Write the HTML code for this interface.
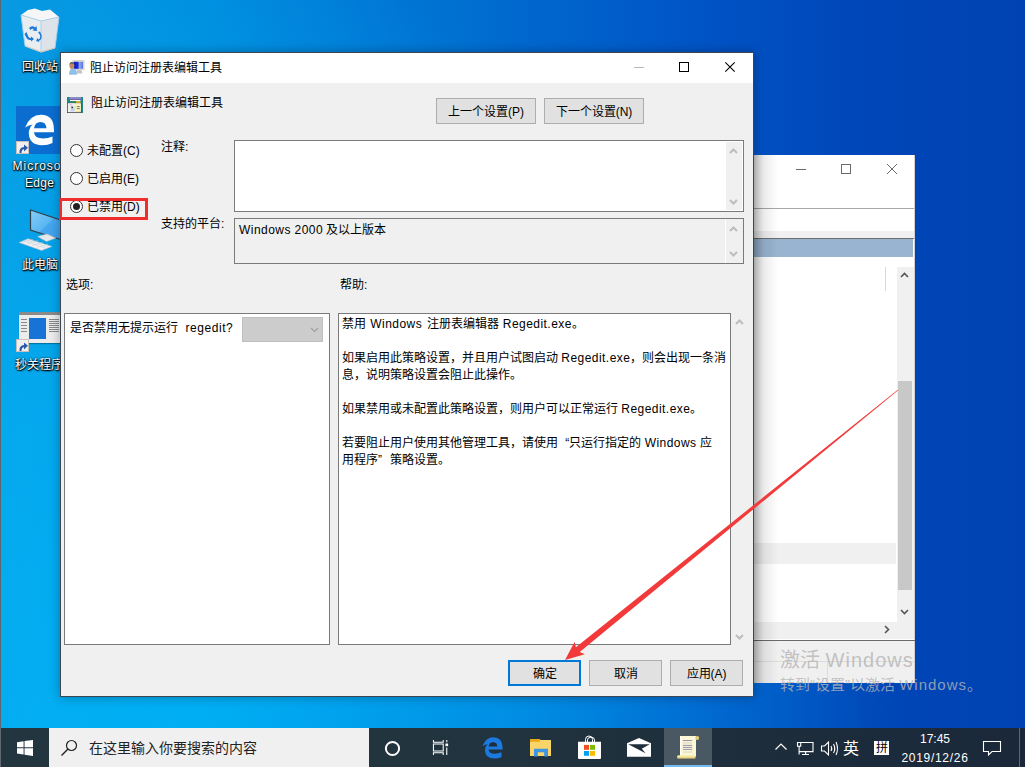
<!DOCTYPE html>
<html lang="zh-CN">
<head>
<meta charset="utf-8">
<style>
*{box-sizing:border-box;margin:0;padding:0}
html,body{width:1025px;height:767px;overflow:hidden}
body{position:relative;font-family:"Liberation Sans",sans-serif;font-size:12px;color:#000;
background:radial-gradient(ellipse 700px 800px at 200px 767px,rgba(0,192,255,.65) 0%,rgba(0,192,255,.4) 50%,rgba(0,192,255,0) 100%),linear-gradient(90deg,#089ae2 0%,#0090e0 19.5%,#0076d4 39%,#0054c6 68%,#0046b8 85%,#0042b2 100%)}
.a{position:absolute}
.t{position:absolute;white-space:nowrap;line-height:16px;font-size:12px}
.il{position:absolute;color:#fff;font-size:12px;line-height:16px;white-space:nowrap;text-shadow:0 1px 1px #000,1px 1px 2px #000,0 0 2px #000}
.btn{position:absolute;background:#e1e1e1;border:1px solid #adadad;text-align:center;line-height:24px;padding-top:1px;font-size:12px;white-space:nowrap}
.box{position:absolute;border:1px solid #7a7a7a;background:#fff}
.radio{position:absolute;width:13px;height:13px;border:1px solid #333;border-radius:50%;background:#fff}
svg{position:absolute;overflow:visible}
.l{letter-spacing:.45px}
.q1{margin-left:4px}
.q2{margin-right:4.5px}
</style>
</head>
<body>
<!-- left dark strip -->
<div class="a" style="left:0;top:0;width:1px;height:728px;background:#5a6670"></div>

<!-- ============ desktop icons ============ -->
<!-- recycle bin -->
<svg style="left:0;top:0" width="70" height="60" viewBox="0 0 70 60">
  <path d="M21 15 L28 10 L35 8.5 L42 11 L50 9.5 L59 17 L41 21 Z" fill="#f6f6f6"/>
  <path d="M21 15 L41 21 L41 52 L25 46 Z" fill="#e9edf0"/>
  <path d="M41 21 L59 17 L55 48 L41 52 Z" fill="#dde3e8"/>
  <path d="M21 15 L41 21 L59 17 M41 21 L41 52 M21 15 L25 46 L41 52 L55 48 L59 17" stroke="#a8d0ec" stroke-width="0.9" fill="none"/>
  <path d="M25 46 L41 52 L55 48" stroke="#d8c8b8" stroke-width="1" fill="none"/>
  <path d="M29 28 Q32 25 35 27.5 L36.5 26 L37 31 L32.5 30.5 L34 29 Q32 28 30.5 30 Z M26.5 32 L28 36 Q29 38.5 31 38 L31 36.5 L34 39 L31 41.5 L31 40 Q27.5 40.5 26 37 L24.5 34 Z M38 32 L40 35 Q41 38 38.5 39.5 L37.5 38 L36 41 L39.5 42 L39 40.8 Q42.5 39 41.5 35 L40 31.5 Z" fill="#1a78d6"/>
</svg>
<div class="il" style="left:22px;top:59px">回收站</div>

<!-- edge -->
<div class="a" style="left:16px;top:106px;width:48px;height:48px;background:#0b6dd0"></div>
<svg style="left:16px;top:106px" width="48" height="48" viewBox="0 0 48 48">
  <path d="M38 26.3 L18 26.3 Q18.5 32.5 27 32.5 Q32 32.5 36.5 30.5 L36.5 37 Q32 39.2 26 39.2 Q13 39 12.8 27 Q13 22 16.5 18.5 Q12 19.5 9.1 21.5 Q14 9 25 8.8 Q38 8.8 38 24 Z" fill="#fff"/>
  <path d="M18 22.3 Q19 16 24.5 16 Q30 16 30.5 22.3 Z" fill="#0b6dd0"/>
</svg>
<div class="a" style="left:16px;top:141px;width:13px;height:13px;background:#f0f0f0;border:1px solid #c8c0b8"></div>
<svg style="left:18px;top:143px" width="10" height="10" viewBox="0 0 10 10"><path d="M1.5 10 Q1 4.5 6 4 L6 1.5 L10 4.8 L6 8.5 L6 6.2 Q3.5 6.5 3.5 10 Z" fill="#2c5aa8"/></svg>
<div class="il" style="left:12.5px;top:158px;letter-spacing:1px">Microsoft</div>
<div class="il" style="left:25px;top:175px;letter-spacing:.3px">Edge</div>

<!-- this pc -->
<svg style="left:18px;top:208px" width="46" height="46" viewBox="0 0 46 46">
  <defs><linearGradient id="scr" x1="0" y1="0" x2="1" y2="1"><stop offset="0" stop-color="#86cdf8"/><stop offset="0.5" stop-color="#5ab6f2"/><stop offset="0.52" stop-color="#45a8ee"/><stop offset="1" stop-color="#3a9ae8"/></linearGradient></defs>
    <path d="M12.5 2 L44 12.5 L44 32 L12.5 22 Z" fill="url(#scr)" stroke="#34414c" stroke-width="1.2"/>
  <path d="M19.5 28.5 L29 26 L38 30 L28.5 33.5 Z" fill="#e4e8ea" stroke="#b8bec4" stroke-width="0.5"/>
  <path d="M1 34.5 L10 30.7 L34 38.5 L23.5 42.4 Z" fill="#f0f2f4" stroke="#b0b8c0" stroke-width="0.6"/>
  <path d="M5 33 L28.5 40.5 M7.5 32 L31 39.5 M3.5 34.5 L15 31.5 M9 36 L20 32.5 M14 37.8 L25 34 M19 39.5 L30 36" stroke="#c8ced4" stroke-width="0.5"/>
</svg>
<div class="il" style="left:22px;top:257px">此电脑</div>

<!-- 秒关程序 -->
<div class="a" style="left:19px;top:312px;width:41px;height:31px;background:#ececec;border-top:3px solid #8a8a8a;box-shadow:0 1px 1px rgba(0,0,0,.3)"></div>
<div class="a" style="left:29px;top:318px;width:17px;height:21px;background:#1773d6"></div>
<div class="a" style="left:49px;top:319px;width:10px;height:1px;background:#888;box-shadow:0 2px 0 #888,0 4px 0 #888,0 6px 0 #888,0 8px 0 #888,0 10px 0 #888,0 12px 0 #888"></div>
<div class="a" style="left:21px;top:319px;width:6px;height:1px;background:#888;box-shadow:0 3px 0 #888,0 6px 0 #888,0 9px 0 #888,0 12px 0 #888"></div>
<div class="a" style="left:16px;top:339px;width:13px;height:13px;background:#f0f0f0;border:1px solid #c8c0b8"></div>
<svg style="left:18px;top:341px" width="10" height="10" viewBox="0 0 10 10"><path d="M1.5 10 Q1 4.5 6 4 L6 1.5 L10 4.8 L6 8.5 L6 6.2 Q3.5 6.5 3.5 10 Z" fill="#2c5aa8"/></svg>
<div class="il" style="left:15px;top:357px">秒关程序</div>

<!-- ============ behind window ============ -->
<div class="a" style="left:753px;top:155px;width:162px;height:528px;background:#fff;border-right:1px solid #d0d0d0;border-bottom:1px solid #d0d0d0"></div>
<div class="a" style="left:796px;top:169px;width:10px;height:1px;background:#6a6a6a"></div>
<div class="a" style="left:841px;top:164px;width:10px;height:10px;border:1px solid #6a6a6a"></div>
<svg style="left:887px;top:164px" width="10" height="10"><path d="M0 0 L10 10 M10 0 L0 10" stroke="#6a6a6a" stroke-width="1"/></svg>
<div class="a" style="left:753px;top:208px;width:161px;height:1px;background:#a8a8a8"></div>
<div class="a" style="left:753px;top:231px;width:161px;height:8px;background:#f0f0f0;border-bottom:1px solid #6e6e6e"></div>
<div class="a" style="left:753px;top:239px;width:160px;height:18px;background:#99b4d1"></div>
<div class="a" style="left:753px;top:543px;width:143px;height:21px;background:#f0f0f0"></div>
<div class="a" style="left:885px;top:267px;width:1px;height:24px;background:#d8d8d8"></div>
<div class="a" style="left:897px;top:267px;width:17px;height:355px;background:#f0f0f0"></div>
<div class="a" style="left:898px;top:381px;width:14px;height:209px;background:#c8c8c8"></div>
<svg style="left:900px;top:272px" width="9" height="6"><path d="M1 5 L4.5 1.5 L8 5" stroke="#555" stroke-width="1.6" fill="none"/></svg>
<svg style="left:900px;top:609px" width="9" height="6"><path d="M1 1 L4.5 4.5 L8 1" stroke="#555" stroke-width="1.6" fill="none"/></svg>
<div class="a" style="left:753px;top:622px;width:161px;height:17px;background:#f0f0f0"></div>
<svg style="left:884px;top:625px" width="6" height="9"><path d="M1 1 L4.5 4.5 L1 8" stroke="#555" stroke-width="1.6" fill="none"/></svg>
<div class="a" style="left:753px;top:640px;width:162px;height:1px;background:#6a6a6a"></div>
<div class="a" style="left:753px;top:641px;width:161px;height:42px;background:#f0f0f0"></div>
<div class="a" style="left:753px;top:661px;width:161px;height:1px;background:#dcdcdc"></div>
<div class="a" style="left:827px;top:661px;width:1px;height:22px;background:#dcdcdc"></div>
<!-- shadow cast by dialog -->
<div class="a" style="left:754px;top:155px;width:24px;height:528px;background:linear-gradient(90deg,rgba(0,0,0,.22),rgba(0,0,0,.08) 40%,rgba(0,0,0,0))"></div>

<!-- ============ dialog ============ -->
<div class="a" style="left:60px;top:52px;width:694px;height:645px;border:1px solid #3a4654;background:#f0f0f0;box-shadow:0 0 10px rgba(0,0,0,.3)"></div>
<div class="a" style="left:61px;top:53px;width:692px;height:30px;background:#fff"></div>
<!-- title icon -->
<svg style="left:64px;top:56px" width="24" height="24" viewBox="0 0 24 24">
  <defs><linearGradient id="sg" x1="0" x2="1"><stop offset="0" stop-color="#0a10c0"/><stop offset=".45" stop-color="#1830d8"/><stop offset=".6" stop-color="#90a8f4"/><stop offset="1" stop-color="#5870e0"/></linearGradient></defs>
  <rect x="8.4" y="4" width="12.2" height="10" fill="#dad6ca"/>
  <rect x="9.8" y="5.8" width="9.2" height="7" fill="url(#sg)"/>
  <path d="M13 14 H17.5 L18.5 17.5 H12.5 Z" fill="#c4c4c4"/>
  <path d="M5 18.8 Q5 12.8 8.5 12.5 L10 12.5 Q13 12.8 13 18.8 Z" fill="#90c0e8"/>
  <ellipse cx="7.9" cy="9.8" rx="2.5" ry="3.1" fill="#c08a62"/>
  <path d="M5.4 9 Q5.6 5.8 8 5.9 Q10.4 6 10.4 9 Q9.5 7.5 8 7.6 Q6.5 7.5 5.4 9 Z" fill="#555"/>
</svg>
<div class="t" style="left:90px;top:60px">阻止访问注册表编辑工具</div>
<div class="a" style="left:634px;top:67px;width:10px;height:1px;background:#b8b8b8"></div>
<div class="a" style="left:679px;top:62px;width:10px;height:10px;border:1px solid #000"></div>
<svg style="left:725px;top:62px" width="10" height="10"><path d="M0.3 0.3 L9.7 9.7 M9.7 0.3 L0.3 9.7" stroke="#000" stroke-width="1.1"/></svg>

<!-- policy icon -->
<svg style="left:67px;top:97px" width="16" height="16" viewBox="0 0 16 16">
  <rect x="0" y="0" width="16" height="16" fill="#1a8a80"/>
  <rect x="2.5" y="0" width="11.5" height="2.5" fill="#8c8cc8"/>
  <rect x="1.5" y="2" width="13" height="1" fill="#6868a8"/>
  <rect x="3" y="3" width="10.5" height="1.2" fill="#f4f4ff"/>
  <rect x="3" y="4.2" width="6" height="1.2" fill="#3a8a50"/>
  <rect x="9" y="4.2" width="4.5" height="1.8" fill="#f0c020"/>
  <rect x="0" y="5.8" width="14.5" height="10.2" fill="#4a4a4a"/>
  <rect x="0.8" y="6.2" width="13" height="9" fill="#f4f4f4"/>
  <circle cx="5.2" cy="10.4" r="4.1" fill="#e8f0e8"/>
  <path d="M5.2 10.4 L2 8 A4.1 4.1 0 0 1 5.2 6.3 Z" fill="#f0c8e8"/>
  <path d="M5.2 10.4 L3 14 A4.1 4.1 0 0 0 8.5 12.5 Z" fill="#c8d0f4"/>
  <path d="M5.2 10.4 L8.5 12.5 A4.1 4.1 0 0 0 9 9 Z" fill="#c8f0c8"/>
  <circle cx="5.2" cy="10.4" r="0.9" fill="#333"/>
  <rect x="8.8" y="6.8" width="5" height="7" fill="#fff2b8"/>
  <rect x="9.8" y="9.2" width="3" height="0.9" fill="#6a6a8a"/>
  <rect x="9.8" y="11.2" width="3" height="0.9" fill="#6a6a8a"/>
  <rect x="8" y="14" width="5" height="1" fill="#f0e0a0"/>
</svg>
<div class="t" style="left:91px;top:95px">阻止访问注册表编辑工具</div>

<div class="btn" style="left:436px;top:98px;width:100px;height:26px">上一个设置(P)</div>
<div class="btn" style="left:544px;top:98px;width:100px;height:26px">下一个设置(N)</div>

<!-- radios -->
<div class="radio" style="left:70px;top:144px"></div>
<div class="t" style="left:87px;top:143px">未配置(C)</div>
<div class="radio" style="left:70px;top:172px"></div>
<div class="t" style="left:87px;top:171px">已启用(E)</div>
<div class="radio" style="left:70px;top:200px"></div>
<div class="a" style="left:73px;top:203px;width:7px;height:7px;border-radius:50%;background:#222"></div>
<div class="t" style="left:87px;top:199px">已禁用(D)</div>
<div class="a" style="left:59px;top:198px;width:89px;height:22px;border:3px solid #f02c2c"></div>

<div class="t" style="left:161px;top:139px">注释:</div>
<div class="box" style="left:234px;top:140px;width:510px;height:72px"></div>
<div class="a" style="left:726px;top:142px;width:16px;height:68px;background:#f0f0f0"></div>
<svg style="left:729px;top:148px" width="9" height="6"><path d="M1 5 L4.5 1.5 L8 5" stroke="#bdbdbd" stroke-width="2" fill="none"/></svg>
<svg style="left:729px;top:199px" width="9" height="6"><path d="M1 1 L4.5 4.5 L8 1" stroke="#bdbdbd" stroke-width="2" fill="none"/></svg>

<div class="t" style="left:161px;top:216px">支持的平台:</div>
<div class="box" style="left:234px;top:218px;width:510px;height:46px;background:#f0f0f0"></div>
<div class="a" style="left:725px;top:219px;width:1px;height:44px;background:#fff"></div>
<div class="t" style="left:239px;top:222px"><span class="l">Windows 2000</span> 及以上版本</div>
<svg style="left:729px;top:226px" width="9" height="6"><path d="M1 5 L4.5 1.5 L8 5" stroke="#bdbdbd" stroke-width="2" fill="none"/></svg>
<svg style="left:729px;top:251px" width="9" height="6"><path d="M1 1 L4.5 4.5 L8 1" stroke="#bdbdbd" stroke-width="2" fill="none"/></svg>

<div class="t" style="left:66px;top:277px">选项:</div>
<div class="t" style="left:340px;top:277px">帮助:</div>

<div class="box" style="left:64px;top:313px;width:266px;height:332px"></div>
<div class="t" style="left:70px;top:320px">是否禁用无提示运行 <span class="l" style="margin-left:4.2px;letter-spacing:.55px">regedit?</span></div>
<div class="a" style="left:242px;top:317px;width:81px;height:25px;background:#cccccc;border:1px solid #bfbfbf"></div>
<svg style="left:310px;top:327px" width="9" height="6"><path d="M1 1 L4.5 4.5 L8 1" stroke="#a0a0a0" stroke-width="1.2" fill="none"/></svg>

<div class="box" style="left:338px;top:313px;width:393px;height:332px"></div>
<div class="a" style="left:342px;top:316px;line-height:17px;font-size:12px;white-space:nowrap"><span style="word-spacing:1px">禁用 <span class="l">Windows</span> 注册表编辑器 <span class="l">Regedit.exe</span>。</span><br><br>如果启用此策略设置，并且用户试图启动 <span class="l">Regedit.exe</span>，则会出现一条消<br>息，说明策略设置会阻止此操作。<br><br>如果禁用或未配置此策略设置，则用户可以正常运行 <span class="l">Regedit.exe</span>。<br><br>若要阻止用户使用其他管理工具，请使用 <span class="q1">“</span>只运行指定的 <span class="l">Windows</span> 应<br>用程序<span class="q2">”</span> 策略设置。</div>
<svg style="left:735px;top:319px" width="9" height="6"><path d="M1 5 L4.5 1.5 L8 5" stroke="#bdbdbd" stroke-width="2" fill="none"/></svg>
<svg style="left:735px;top:634px" width="9" height="6"><path d="M1 1 L4.5 4.5 L8 1" stroke="#bdbdbd" stroke-width="2" fill="none"/></svg>

<div class="btn" style="left:508px;top:660px;width:73px;height:26px;border:2px solid #0078d7;line-height:22px;padding-top:1px">确定</div>
<div class="btn" style="left:589px;top:660px;width:73px;height:26px">取消</div>
<div class="btn" style="left:670px;top:660px;width:73px;height:26px">应用(A)</div>

<!-- ============ red arrow ============ -->
<svg style="left:0;top:0" width="1025" height="767">
  <path d="M898.2 390.3 L579.7 651.9 L584.8 654.2 L565.0 660.0 L574.7 641.8 L575.9 647.3 L897.8 389.7 Z" fill="#f23a3a"/>
</svg>

<!-- ============ watermark ============ -->
<div class="a" style="left:780px;top:648px;font-size:20px;line-height:24px;color:rgba(180,180,180,.8);white-space:nowrap">激活 <span style="letter-spacing:1px">Windows</span></div>
<div class="a" style="left:780px;top:676px;font-size:15px;line-height:18px;color:rgba(180,180,180,.8);white-space:nowrap">转到“设置”以激活 <span style="letter-spacing:1px">Windows</span>。</div>

<!-- ============ taskbar ============ -->
<div class="a" style="left:0;top:728px;width:1025px;height:39px;background:linear-gradient(90deg,#233640,#22353f 40%,#1e2e3c 70%,#1a283a)"></div>
<svg style="left:17px;top:740px" width="16" height="16" viewBox="0 0 17 17"><path d="M0 2.3 L7 1.3 L7 7.8 L0 7.8 Z M8 1.1 L17 0 L17 7.8 L8 7.8 Z M0 8.8 L7 8.8 L7 15.3 L0 14.4 Z M8 8.8 L17 8.8 L17 17 L8 15.6 Z" fill="#fff"/></svg>
<div class="a" style="left:49px;top:728px;width:320px;height:39px;background:#f0f0f0"></div>
<svg style="left:60px;top:739px" width="18" height="18"><circle cx="11.5" cy="6.5" r="5" stroke="#222" stroke-width="1.2" fill="none"/><path d="M8 10 L1.5 16.5" stroke="#222" stroke-width="1.4"/></svg>
<div class="t" style="left:89px;top:739px;color:#222;font-size:14px;line-height:18px">在这里输入你要搜索的内容</div>
<!-- cortana -->
<svg style="left:384px;top:740px" width="17" height="17"><circle cx="8.5" cy="8.5" r="6.6" stroke="#fff" stroke-width="2" fill="none"/></svg>
<!-- task view -->
<svg style="left:433px;top:740px" width="16" height="15" viewBox="0 0 18 17" preserveAspectRatio="none"><path d="M0.5 0 V2.5 H11.5 V0 M0.5 17 V14.5 H11.5 V17 M0.5 4.5 H11.5 V12.5 H0.5 Z" stroke="#fff" stroke-width="1.2" fill="none"/><rect x="14" y="4" width="3" height="3" fill="#fff"/><path d="M15.5 0 V2.5 M15.5 8.5 V17" stroke="#fff" stroke-width="1.2"/></svg>
<!-- edge -->
<svg style="left:475.5px;top:730.8px" width="33.6" height="33.6" viewBox="0 0 48 48">
  <path d="M38 26.3 L18 26.3 Q18.5 32.5 27 32.5 Q32 32.5 36.5 30.5 L36.5 37 Q32 39.2 26 39.2 Q13 39 12.8 27 Q13 22 16.5 18.5 Q12 19.5 9.1 21.5 Q14 9 25 8.8 Q38 8.8 38 24 Z" fill="#1a7ae0"/>
  <path d="M18 22.3 Q19 16 24.5 16 Q30 16 30.5 22.3 Z" fill="#1e2d3b"/>
</svg>
<!-- folder -->
<svg style="left:525px;top:732px" width="80" height="30" viewBox="0 0 80 30">
  <path d="M5 7 H14.5 L15.5 8 H26 V24 H5 Z" fill="#f9d469"/>
  <path d="M5 7 H14 L15 8.2 V9.8 H5 Z" fill="#e6a817"/>
  <path d="M9 16.8 H23 V24.6 H19.2 V20.3 H12.8 V24.6 H9 Z" fill="#3d95e4"/>
</svg>
<!-- store -->
<svg style="left:525px;top:732px" width="80" height="30" viewBox="0 0 80 30">
  <path d="M60.5 10 V7.5 Q60.5 4 64 4 Q67.5 4 67.5 7.5 V10 M62.5 10 V8 Q62.5 5.2 66 5.2 Q69.5 5.2 69.5 8 V10" stroke="#fff" stroke-width="1" fill="none"/>
  <path d="M53 9.8 H76 V26 Q76 27 75 27 H54 Q53 27 53 26 Z" fill="#fff"/>
  <rect x="59" y="12.9" width="5" height="4.9" fill="#f25022"/>
  <rect x="65" y="12.9" width="5" height="4.9" fill="#7fba00"/>
  <rect x="59" y="19" width="5" height="4.8" fill="#00a4ef"/>
  <rect x="65" y="19" width="5" height="4.8" fill="#ffb900"/>
</svg>
<!-- mail -->
<svg style="left:627px;top:738px" width="25" height="19" viewBox="0 0 25 19"><path d="M0 5.3 L12 0 L24 5.3 V18.8 H0 Z" fill="#fff"/><path d="M1.2 6.3 H22.7 L14.8 10.8 L18.6 15.3 Z" fill="#1f2e3c"/></svg>
<!-- active app -->
<div class="a" style="left:664px;top:728px;width:48px;height:39px;background:#4a5864"></div>
<div class="a" style="left:664px;top:765px;width:48px;height:2px;background:#76b9ed"></div>
<svg style="left:676px;top:735px" width="25" height="25" viewBox="0 0 25 25">
  <rect x="4" y="1" width="16" height="20.5" fill="#fbf6d6"/>
  <rect x="4" y="1" width="1.2" height="20" fill="#fffef0"/>
  <circle cx="21.2" cy="3" r="2" fill="#e2cc78"/>
  <rect x="1" y="20.3" width="18.5" height="3" rx="1.5" fill="#f6eaa8"/>
  <rect x="1.5" y="22.5" width="18" height="1" fill="#d8be5a"/>
  <path d="M6.9 5.5 H16.2 M6.9 10.4 H16.2 M6.9 12.4 H16.2 M6.9 14.4 H16.2" stroke="#8c88a4" stroke-width="0.9"/>
  <path d="M6.9 7.9 H16.2 M6.9 17 H16.2" stroke="#d4d0c4" stroke-width="0.9"/>
</svg>
<!-- tray -->
<svg style="left:775px;top:743px" width="12" height="7"><path d="M0.5 6.5 L6 1 L11.5 6.5" stroke="#fff" stroke-width="1.2" fill="none"/></svg>
<svg style="left:796px;top:741px" width="18" height="15" viewBox="0 0 18 15"><path d="M1.5 1.5 H4.7 V5.2 H1.5 Z M3.1 5.2 V13.5 M4.7 1.5 H17 V10.6 H3.1 M9.6 10.6 V13.3 M6 13.5 H13" stroke="#fff" stroke-width="1.1" fill="none"/></svg>
<svg style="left:821px;top:741px" width="17" height="15" viewBox="0 0 17 15"><path d="M0.5 5 H3.5 L7.5 1 V14 L3.5 10 H0.5 Z" stroke="#fff" stroke-width="1.1" fill="none"/><path d="M10 5 Q11.5 7.5 10 10 M12.5 3 Q15 7.5 12.5 12 M15 1 Q18 7.5 15 14" stroke="#fff" stroke-width="1.1" fill="none"/></svg>
<div class="a" style="left:843px;top:738.5px;font-size:16px;line-height:20px;color:#fff">英</div>
<div class="a" style="left:874px;top:741px;width:15px;height:14px;background:#fff"></div>
<div class="a" style="left:874px;top:740px;width:15px;font-size:12px;line-height:16px;color:#000;text-align:center">拼</div>
<div class="a" style="left:898px;top:731px;width:74px;text-align:center;font-size:12px;line-height:16px;color:#fff">17:45</div>
<div class="a" style="left:898px;top:750px;width:74px;text-align:center;font-size:12px;line-height:16px;color:#fff;letter-spacing:.7px">2019/12/26</div>
<svg style="left:983px;top:741px" width="18" height="15" viewBox="0 0 18 15"><path d="M0.5 0.5 H17.5 V10.5 H9 L5.5 14 V10.5 H0.5 Z" stroke="#fff" stroke-width="1.1" fill="none"/></svg>
<div class="a" style="left:1019px;top:728px;width:1px;height:39px;background:#5a6a7a"></div>
<div class="a" style="left:0;top:728px;width:1px;height:39px;background:#606870"></div>
</body>
</html>
